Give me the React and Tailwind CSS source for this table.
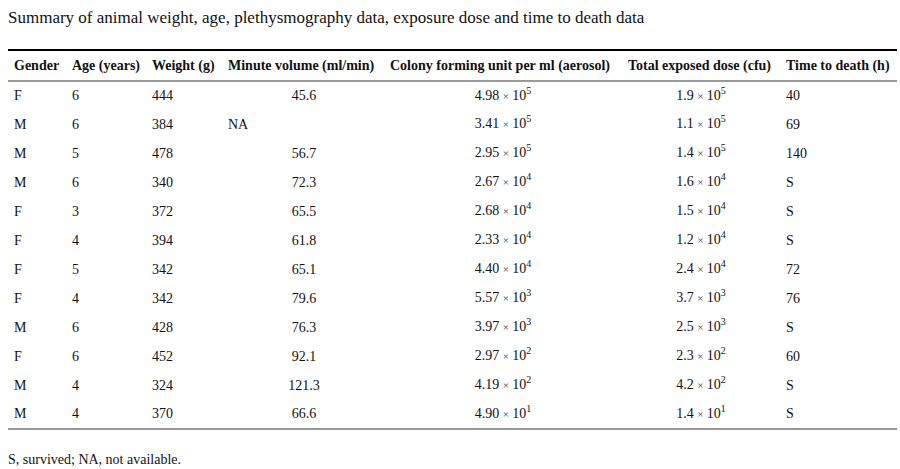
import React from 'react'

const rows = [
  ['F', '6', '444', '45.6', ['4.98', '5'], ['1.9', '5'], '40'],
  ['M', '6', '384', 'NA', ['3.41', '5'], ['1.1', '5'], '69'],
  ['M', '5', '478', '56.7', ['2.95', '5'], ['1.4', '5'], '140'],
  ['M', '6', '340', '72.3', ['2.67', '4'], ['1.6', '4'], 'S'],
  ['F', '3', '372', '65.5', ['2.68', '4'], ['1.5', '4'], 'S'],
  ['F', '4', '394', '61.8', ['2.33', '4'], ['1.2', '4'], 'S'],
  ['F', '5', '342', '65.1', ['4.40', '4'], ['2.4', '4'], '72'],
  ['F', '4', '342', '79.6', ['5.57', '3'], ['3.7', '3'], '76'],
  ['M', '6', '428', '76.3', ['3.97', '3'], ['2.5', '3'], 'S'],
  ['F', '6', '452', '92.1', ['2.97', '2'], ['2.3', '2'], '60'],
  ['M', '4', '324', '121.3', ['4.19', '2'], ['4.2', '2'], 'S'],
  ['M', '4', '370', '66.6', ['4.90', '1'], ['1.4', '1'], 'S'],
]

function Sci({ v }) {
  return (
    <span>
      {v[0]} <span className="text-[11px] text-[#444]">×</span> 10
      <span className="text-[10px] relative -top-[6px]">{v[1]}</span>
    </span>
  )
}

export default function App() {
  return (
    <div className="w-[900px] h-[469px] bg-white text-[#111] font-['Liberation_Serif',serif] px-2 pt-[7px]">
      <h1 className="text-[17px] leading-[22px]">
        Summary of animal weight, age, plethysmography data, exposure dose and time to death data
      </h1>

      <table className="mt-[20px] w-[889px] table-fixed border-collapse text-[14px] leading-[16px]">
        <colgroup>
          <col className="w-[58px]" />
          <col className="w-[80px]" />
          <col className="w-[76px]" />
          <col className="w-[162px]" />
          <col className="w-[238px]" />
          <col className="w-[158px]" />
          <col />
        </colgroup>
        <thead>
          <tr className="border-t-2 border-black border-b-2 border-b-[#999] h-[31px]">
            <th className="text-left pl-[6px] font-bold">Gender</th>
            <th className="text-left pl-[6px] font-bold">Age (years)</th>
            <th className="text-left pl-[6px] font-bold">Weight (g)</th>
            <th className="text-left pl-[6px] font-bold">Minute volume (ml/min)</th>
            <th className="text-left pl-[6px] font-bold">Colony forming unit per ml (aerosol)</th>
            <th className="text-left pl-[6px] font-bold">Total exposed dose (cfu)</th>
            <th className="text-left pl-[6px] font-bold">Time to death (h)</th>
          </tr>
        </thead>
        <tbody className="border-b-2 border-[#999]">
          {rows.map((r, i) => (
            <tr key={i} className="h-[29px]">
              <td className="pl-[6px]">{r[0]}</td>
              <td className="pl-[6px]">{r[1]}</td>
              <td className="pl-[6px]">{r[2]}</td>
              {r[3] === 'NA' ? (
                <td className="pl-[6px]">NA</td>
              ) : (
                <td className="text-center pl-[2px]">{r[3]}</td>
              )}
              <td className="text-center">
                <Sci v={r[4]} />
              </td>
              <td className="text-center">
                <Sci v={r[5]} />
              </td>
              <td className="pl-[6px]">{r[6]}</td>
            </tr>
          ))}
        </tbody>
      </table>

      <p className="mt-[22px] text-[14px] leading-[16px]">S, survived; NA, not available.</p>
    </div>
  )
}
